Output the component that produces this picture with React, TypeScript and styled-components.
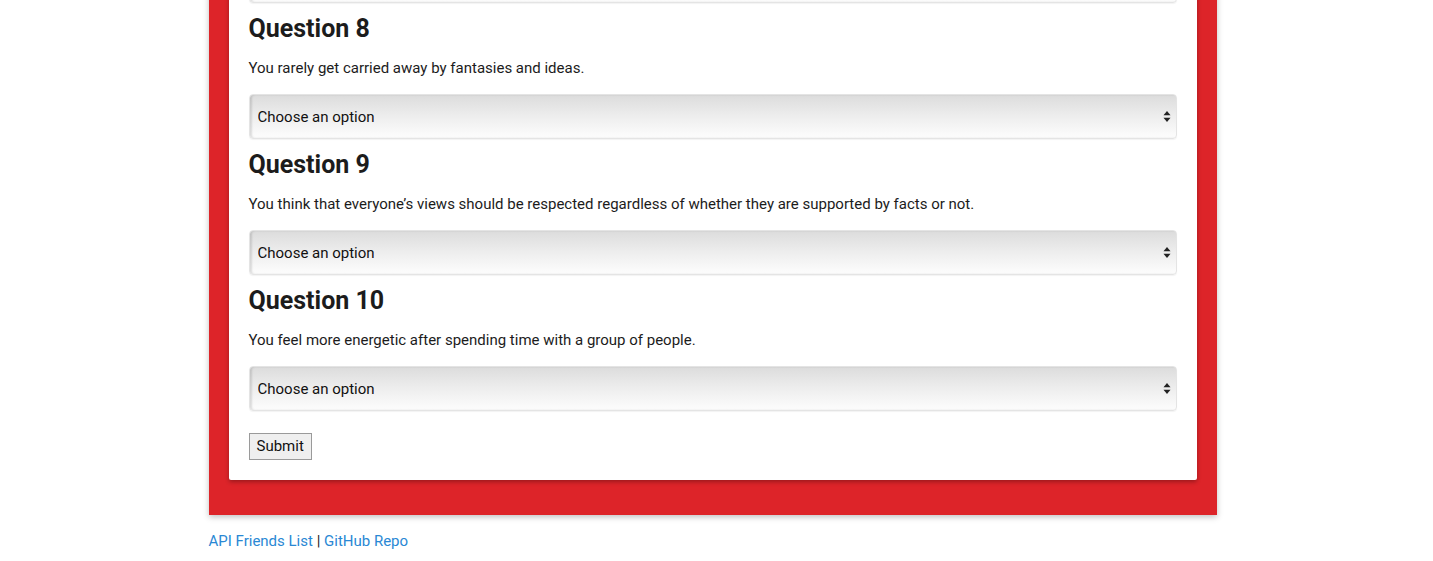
import React from "react";
import styled, { createGlobalStyle } from "styled-components";

const Global = createGlobalStyle`
  html, body { margin: 0; padding: 0; background: #fff; }
  body { font-family: Roboto, "Liberation Sans", Arial, sans-serif; color: #1a1a1a; overflow: hidden; }
`;

const Page = styled.div`
  padding-right: 8px;
  margin-top: -42px;
`;

const RedBox = styled.div`
  width: 1008px;
  margin: 0 auto;
  box-sizing: border-box;
  background: #dd2429;
  padding: 0 20px 35px;
  box-shadow: 0 2px 6px rgba(0, 0, 0, 0.25);
`;

const Card = styled.form`
  background: #fff;
  padding: 0 20px 20px;
  box-shadow: 0 2px 4px rgba(0, 0, 0, 0.3);
  border-radius: 0 0 2px 2px;
`;

const Heading = styled.h2`
  font-size: 25px;
  font-weight: 700;
  line-height: 29px;
  margin: 11px 0 15px;
  color: #1c1c1c;
`;

const Prompt = styled.p`
  font-size: 15px;
  line-height: 20px;
  margin: 0 0 16px;
  color: #1c1c1c;
`;

const SelectWrap = styled.div`
  position: relative;
  height: 45px;
`;

const Select = styled.select`
  appearance: none;
  -webkit-appearance: none;
  width: 100%;
  height: 45px;
  box-sizing: border-box;
  border: 1px solid #e4e4e4;
  border-radius: 4px;
  padding: 0 30px 0 8px;
  font-family: Roboto, "Liberation Sans", Arial, sans-serif;
  font-size: 15px;
  color: #111;
  background: linear-gradient(to bottom, #dcdcdc 0%, #ececec 45%, #fdfdfd 100%);
  box-shadow: inset 2px 0 2px rgba(0, 0, 0, 0.12), 0 1px 1px rgba(0, 0, 0, 0.05);
  outline: none;
`;

const Arrows = styled.svg`
  position: absolute;
  right: 6px;
  top: 17px;
  width: 8px;
  height: 11px;
  pointer-events: none;
`;

const SubmitButton = styled.button`
  margin-top: 22px;
  font-family: Roboto, "Liberation Sans", Arial, sans-serif;
  font-size: 15px;
  line-height: 19px;
  padding: 3px 7px;
  color: #111;
  background: #efefef;
  border: 1px solid #9a9a9a;
  border-radius: 0;
`;

const Footer = styled.div`
  width: 1008px;
  margin: 16px auto 0;
  font-size: 15px;
  line-height: 20px;
  color: #222;
`;

const Link = styled.a`
  color: #2a88d4;
  text-decoration: none;
`;

const ChooseSelect = () => (
  <SelectWrap>
    <Select defaultValue="">
      <option value="">Choose an option</option>
      <option>Strongly agree</option>
      <option>Agree</option>
      <option>Neutral</option>
      <option>Disagree</option>
      <option>Strongly disagree</option>
    </Select>
    <Arrows viewBox="0 0 8 11">
      <path d="M4 0 L7.5 4.2 L0.5 4.2 Z" fill="#222" />
      <path d="M4 11 L7.5 6.8 L0.5 6.8 Z" fill="#222" />
    </Arrows>
  </SelectWrap>
);

const questions = [
  { n: 8, text: "You rarely get carried away by fantasies and ideas." },
  { n: 9, text: "You think that everyone’s views should be respected regardless of whether they are supported by facts or not." },
  { n: 10, text: "You feel more energetic after spending time with a group of people." },
];

export default function App() {
  return (
    <>
      <Global />
      <Page>
        <RedBox>
          <Card onSubmit={(e) => e.preventDefault()}>
            <ChooseSelect />
            {questions.map((q) => (
              <div key={q.n}>
                <Heading>Question {q.n}</Heading>
                <Prompt>{q.text}</Prompt>
                <ChooseSelect />
              </div>
            ))}
            <SubmitButton type="submit">Submit</SubmitButton>
          </Card>
        </RedBox>
        <Footer>
          <Link href="#">API Friends List</Link> | <Link href="#">GitHub Repo</Link>
        </Footer>
      </Page>
    </>
  );
}
